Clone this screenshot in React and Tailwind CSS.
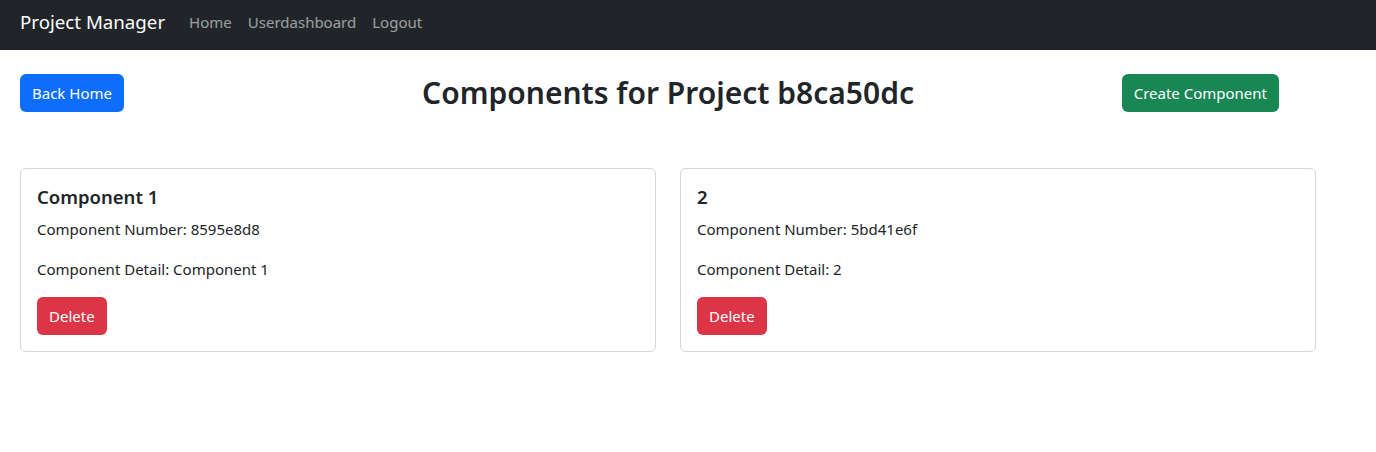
import React from 'react';

const components = [
  { id: 1, name: 'Component 1', number: '8595e8d8', detail: 'Component 1' },
  { id: 2, name: '2', number: '5bd41e6f', detail: '2' },
];

function ComponentCard({ item }) {
  return (
    <div className="rounded-[6px] border border-[#d5d6d7] bg-white p-4">
      <h5 className="mb-2 text-[18.5px] leading-[24px] font-semibold text-[#212529]">{item.name}</h5>
      <p className="mb-4 text-[15px] leading-[24px]">Component Number: {item.number}</p>
      <p className="mb-4 text-[15px] leading-[24px]">Component Detail: {item.detail}</p>
      <button className="h-[38px] rounded-[6px] bg-[#dc3545] px-3 text-[15px] text-white">
        Delete
      </button>
    </div>
  );
}

export default function App() {
  return (
    <div className="min-h-screen bg-white text-[#212529] font-['Noto_Sans',sans-serif]">
      <nav className="flex h-[50px] items-center bg-[#212529] px-5 pb-[5px]">
        <span className="mr-4 text-[18.7px] text-white">Project Manager</span>
        <div className="flex">
          {['Home', 'Userdashboard', 'Logout'].map((l) => (
            <a key={l} className="px-2 text-[15px] text-white/55">{l}</a>
          ))}
        </div>
      </nav>

      <div className="w-[1316px] pl-5">
        <div className="mt-6 grid grid-cols-[1fr_auto_1fr] items-center">
          <div>
            <button className="h-[38px] rounded-[6px] bg-[#0d6efd] px-3 text-[15px] text-white">
              Back Home
            </button>
          </div>
          <h2 className="text-[30px] leading-[38px] font-semibold">Components for Project b8ca50dc</h2>
          <div className="flex justify-end pr-[37px]">
            <button className="h-[38px] rounded-[6px] bg-[#198754] px-3 text-[15px] text-white">
              Create Component
            </button>
          </div>
        </div>

        <div className="mt-[56px] grid grid-cols-[636px_636px] gap-[24px]">
          {components.map((c) => (
            <ComponentCard key={c.id} item={c} />
          ))}
        </div>
      </div>
    </div>
  );
}
